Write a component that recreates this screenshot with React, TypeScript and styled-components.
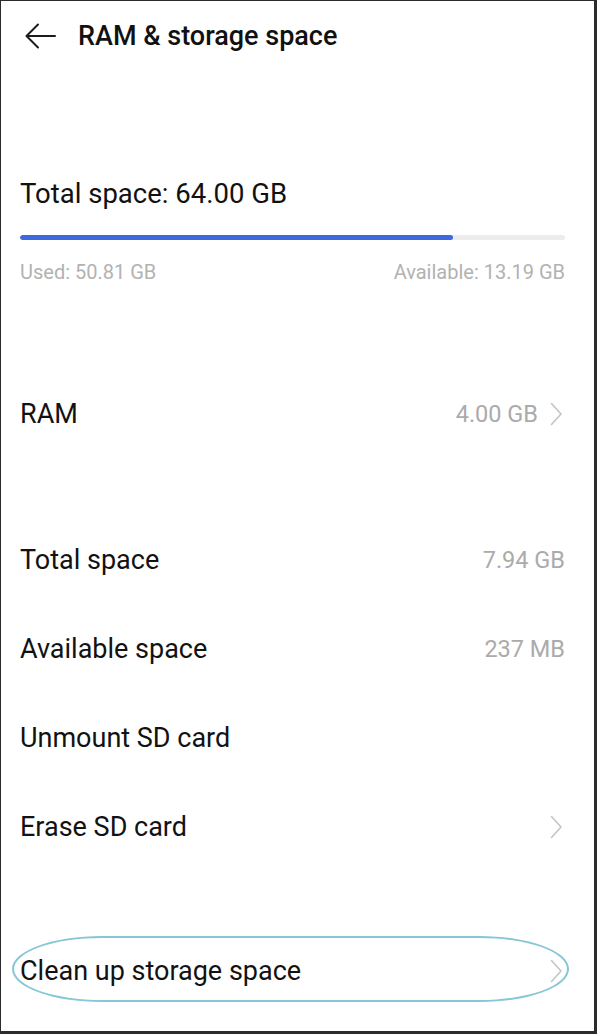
import styled, { createGlobalStyle } from "styled-components";

const GlobalStyle = createGlobalStyle`
  html, body {
    margin: 0;
    padding: 0;
    background: #ffffff;
  }
  * {
    box-sizing: border-box;
  }
`;

const Frame = styled.div`
  width: 597px;
  height: 1034px;
  border-style: solid;
  border-color: #2b2b2b;
  border-width: 1px 3px 3px 1px;
  background: #ffffff;
  font-family: Roboto, "Noto Sans", "Liberation Sans", sans-serif;
  color: #151515;
  overflow: hidden;
`;

const Header = styled.div`
  display: flex;
  align-items: center;
  height: 70px;
  padding-left: 24px;
`;

const BackButton = styled.div`
  display: flex;
  align-items: center;
  width: 32px;
  height: 28px;
  margin-right: 21px;
`;

const Title = styled.h1`
  margin: 0;
  font-size: 27px;
  font-weight: 500;
  color: #111111;
`;

const Summary = styled.section`
  padding: 106px 29px 0 19px;
`;

const SummaryTitle = styled.div`
  font-size: 27.5px;
  line-height: 34px;
  color: #111111;
`;

const Track = styled.div`
  height: 5px;
  margin-top: 24px;
  border-radius: 3px;
  background: #ececec;
  overflow: hidden;
`;

const Fill = styled.div`
  height: 100%;
  border-radius: 3px;
  background: #3e68e0;
`;

const Legend = styled.div`
  display: flex;
  justify-content: space-between;
  margin-top: 19px;
  font-size: 20px;
  line-height: 26px;
  color: #b2b2b2;
`;

const Group = styled.div<{ $gap: number }>`
  margin-top: ${(p) => p.$gap}px;
`;

const Row = styled.div`
  position: relative;
  display: flex;
  align-items: center;
  justify-content: space-between;
  height: 89px;
  padding: 0 29px 0 19px;
`;

const Label = styled.span`
  font-size: 27px;
  color: #121212;
`;

const Value = styled.span`
  display: flex;
  align-items: center;
  gap: 12px;
  font-size: 23.5px;
  color: #ababab;
`;

const Highlight = styled.div`
  position: absolute;
  left: 11px;
  right: 25px;
  top: 10px;
  bottom: 13px;
  border: 2px solid #86c6d6;
  border-radius: 90px / 33px;
  pointer-events: none;
`;

function BackArrow() {
  return (
    <svg width="32" height="28" viewBox="0 0 32 28" fill="none">
      <path
        d="M30 14H2M13 2.5L1.5 14L13 25.5"
        stroke="#1c1c1c"
        strokeWidth="2"
        strokeLinecap="round"
        strokeLinejoin="round"
      />
    </svg>
  );
}

function Chevron() {
  return (
    <svg width="15" height="24" viewBox="0 0 15 24" fill="none">
      <path
        d="M1.5 1.5L11 12L1.5 22.5"
        stroke="#c4c4c4"
        strokeWidth="1.6"
        strokeLinecap="round"
        strokeLinejoin="round"
      />
    </svg>
  );
}

type Item = { label: string; value?: string; chevron?: boolean; highlight?: boolean };

const ram: Item[] = [{ label: "RAM", value: "4.00 GB", chevron: true }];

const sdCard: Item[] = [
  { label: "Total space", value: "7.94 GB" },
  { label: "Available space", value: "237 MB" },
  { label: "Unmount SD card" },
  { label: "Erase SD card", chevron: true },
];

const cleanup: Item[] = [
  { label: "Clean up storage space", chevron: true, highlight: true },
];

function SettingRow({ item }: { item: Item }) {
  return (
    <Row>
      <Label>{item.label}</Label>
      <Value>
        {item.value}
        {item.chevron && <Chevron />}
      </Value>
      {item.highlight && <Highlight />}
    </Row>
  );
}

export default function App() {
  const total = 64;
  const used = 50.81;

  return (
    <Frame>
      <GlobalStyle />
      <Header>
        <BackButton>
          <BackArrow />
        </BackButton>
        <Title>RAM &amp; storage space</Title>
      </Header>

      <Summary>
        <SummaryTitle>Total space: 64.00 GB</SummaryTitle>
        <Track>
          <Fill style={{ width: `${(used / total) * 100}%` }} />
        </Track>
        <Legend>
          <span>Used: 50.81 GB</span>
          <span>Available: 13.19 GB</span>
        </Legend>
      </Summary>

      <Group $gap={84}>
        {ram.map((item) => (
          <SettingRow key={item.label} item={item} />
        ))}
      </Group>

      <Group $gap={57}>
        {sdCard.map((item) => (
          <SettingRow key={item.label} item={item} />
        ))}
      </Group>

      <Group $gap={55}>
        {cleanup.map((item) => (
          <SettingRow key={item.label} item={item} />
        ))}
      </Group>
    </Frame>
  );
}
